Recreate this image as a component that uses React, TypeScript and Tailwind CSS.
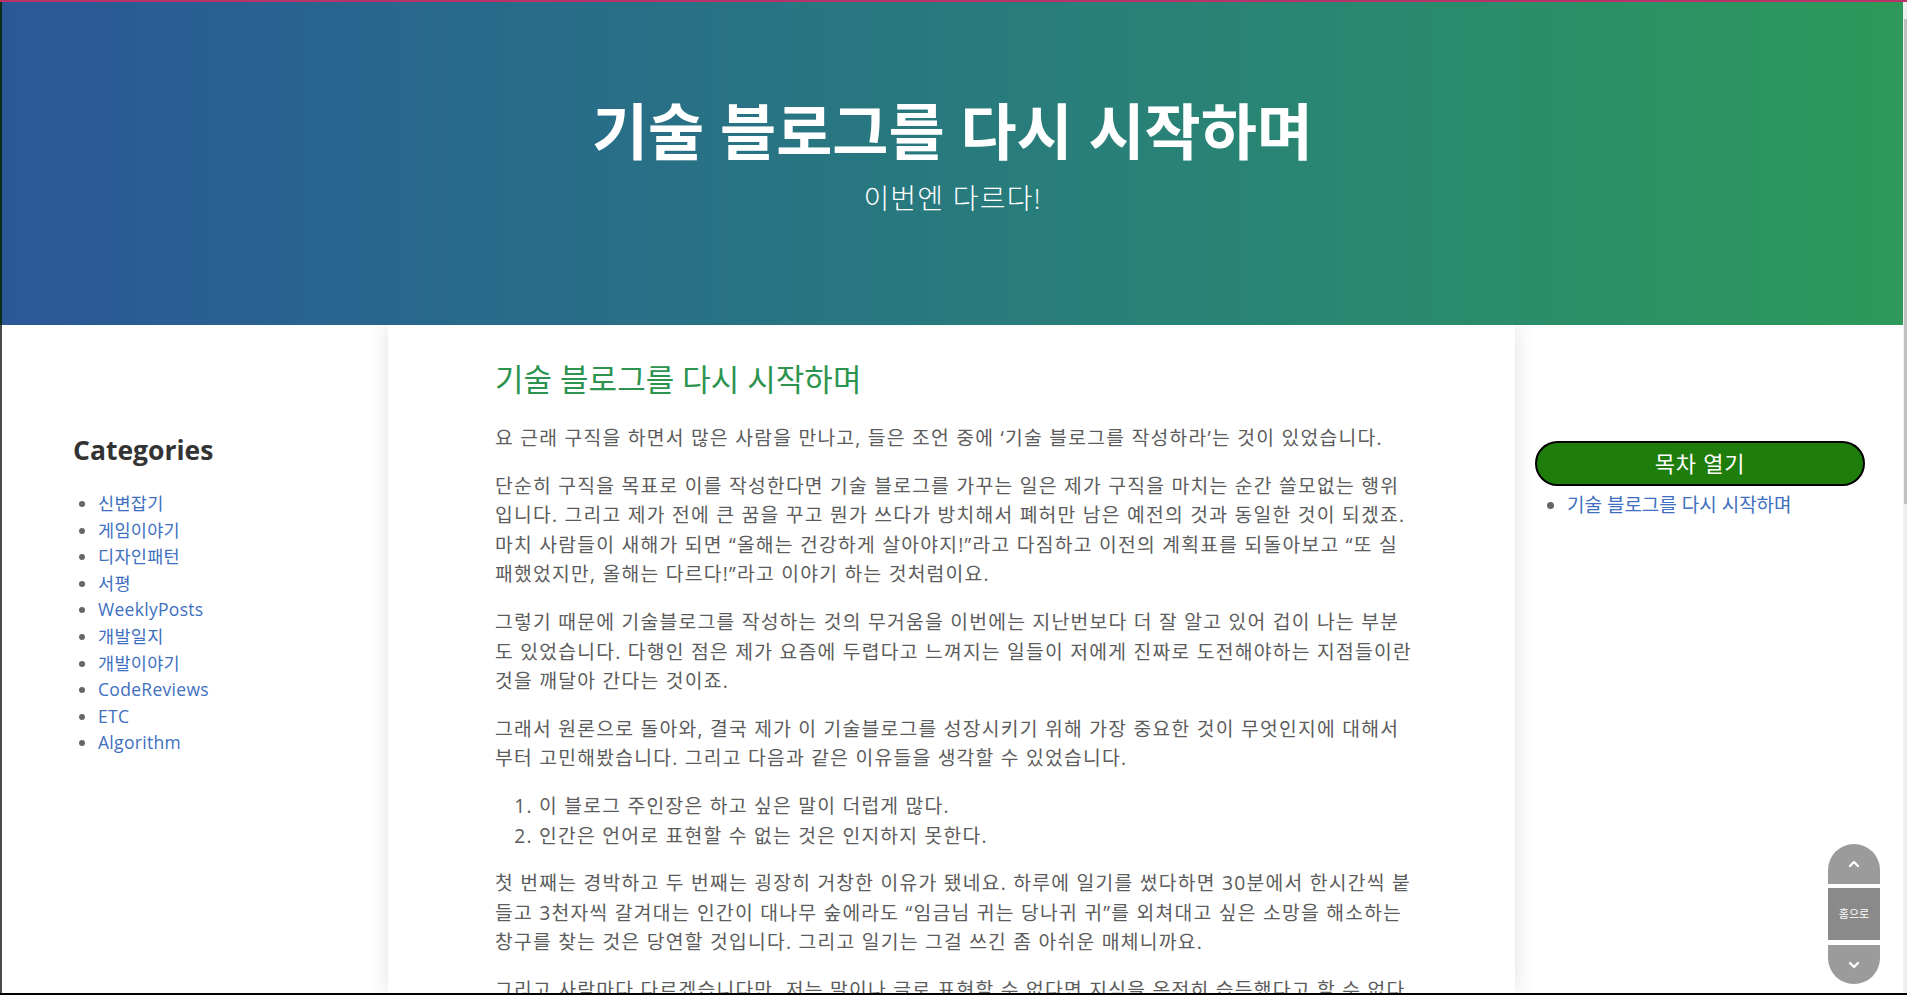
import { ChevronUp, ChevronDown } from "lucide-react";

const categories = [
  "신변잡기",
  "게임이야기",
  "디자인패턴",
  "서평",
  "WeeklyPosts",
  "개발일지",
  "개발이야기",
  "CodeReviews",
  "ETC",
  "Algorithm",
];

const paragraphs = [
  "요 근래 구직을 하면서 많은 사람을 만나고, 들은 조언 중에 ‘기술 블로그를 작성하라’는 것이 있었습니다.",
  "단순히 구직을 목표로 이를 작성한다면 기술 블로그를 가꾸는 일은 제가 구직을 마치는 순간 쓸모없는 행위입니다. 그리고 제가 전에 큰 꿈을 꾸고 뭔가 쓰다가 방치해서 폐허만 남은 예전의 것과 동일한 것이 되겠죠. 마치 사람들이 새해가 되면 “올해는 건강하게 살아야지!”라고 다짐하고 이전의 계획표를 되돌아보고 “또 실패했었지만, 올해는 다르다!”라고 이야기 하는 것처럼이요.",
  "그렇기 때문에 기술블로그를 작성하는 것의 무거움을 이번에는 지난번보다 더 잘 알고 있어 겁이 나는 부분도 있었습니다. 다행인 점은 제가 요즘에 두렵다고 느껴지는 일들이 저에게 진짜로 도전해야하는 지점들이란 것을 깨달아 간다는 것이죠.",
  "그래서 원론으로 돌아와, 결국 제가 이 기술블로그를 성장시키기 위해 가장 중요한 것이 무엇인지에 대해서부터 고민해봤습니다. 그리고 다음과 같은 이유들을 생각할 수 있었습니다.",
];

const reasons = [
  "이 블로그 주인장은 하고 싶은 말이 더럽게 많다.",
  "인간은 언어로 표현할 수 없는 것은 인지하지 못한다.",
];

const after = [
  "첫 번째는 경박하고 두 번째는 굉장히 거창한 이유가 됐네요. 하루에 일기를 썼다하면 30분에서 한시간씩 붙들고 3천자씩 갈겨대는 인간이 대나무 숲에라도 “임금님 귀는 당나귀 귀”를 외쳐대고 싶은 소망을 해소하는 창구를 찾는 것은 당연할 것입니다. 그리고 일기는 그걸 쓰긴 좀 아쉬운 매체니까요.",
  "그리고 사람마다 다르겠습니다만, 저는 말이나 글로 표현할 수 없다면 지식을 온전히 습득했다고 할 수 없다고 생각합니다. 그래서 이번에는 배운 것을 글로 정리하는 연습을 꾸준히 해보려고 합니다.",
];

export default function App() {
  return (
    <div className="flex h-[995px] w-full overflow-hidden border-t-2 border-b-2 border-t-[#b8336a] border-b-black bg-white font-['Open_Sans','Noto_Sans_CJK_KR',sans-serif]">
      <div className="relative flex min-w-0 flex-1 flex-col">
        {/* Header */}
        <header className="h-[323px] shrink-0 border-l-2 border-black/70 bg-gradient-to-r from-[#2b5797] to-[#2e9959] text-center text-white">
          <h1 className="pt-[93px] text-[61px] font-bold leading-[73px]">기술 블로그를 다시 시작하며</h1>
          <p className="mt-[10px] text-[28px] font-light leading-[40px] tracking-[1.2px]">이번엔 다르다!</p>
        </header>

        <div className="flex min-h-0 flex-1 overflow-hidden border-l-2 border-black/70">
          {/* Categories */}
          <aside className="w-[386px] shrink-0 pl-[71px] pt-[107px]">
            <h2 className="text-[26.5px] font-bold leading-[36px] text-[#333]">Categories</h2>
            <ul className="mt-[22px] list-disc pl-[25px] text-[17.5px] leading-[26.6px] tracking-[0.3px] text-[#3e6fc0] marker:text-[#666]">
              {categories.map((c) => (
                <li key={c}>
                  <a href="#">{c}</a>
                </li>
              ))}
            </ul>
          </aside>

          {/* Post */}
          <main className="w-[1127px] shrink-0 bg-white pl-[107px] pr-[102px] pt-[34px] shadow-[0_0_20px_rgba(0,0,0,0.12)]">
            <h2 className="text-[31px] leading-[40px] text-[#2d9450]">기술 블로그를 다시 시작하며</h2>
            <div className="mt-[24px] text-[19.3px] leading-[29.6px] tracking-[1.25px] text-[#5c5c5c]">
              {paragraphs.map((p, i) => (
                <p key={i} className="mb-[18px]">{p}</p>
              ))}
              <ol className="mb-[18px] list-decimal pl-[44px]">
                {reasons.map((r) => (
                  <li key={r}>{r}</li>
                ))}
              </ol>
              {after.map((p, i) => (
                <p key={i} className="mb-[18px]">{p}</p>
              ))}
            </div>
          </main>

          {/* Table of contents */}
          <aside className="flex-1 pl-[20px] pr-[38px] pt-[116px]">
            <button className="h-[45px] w-full rounded-full border-2 border-black bg-[#1f7d0c] text-[22px] tracking-[0.8px] text-white">
              목차 열기
            </button>
            <ul className="mt-[5px] list-disc pl-[32px] text-[19px] leading-[28.5px] text-[#3e6fc0] marker:text-[#666]">
              <li>
                <a href="#">기술 블로그를 다시 시작하며</a>
              </li>
            </ul>
          </aside>
        </div>

        {/* Floating nav */}
        <div className="absolute bottom-[9px] right-[23px] flex w-[52px] flex-col gap-[4px]">
          <button className="flex h-[40px] items-center justify-center rounded-t-[26px] bg-[#9b9b9b] text-white">
            <ChevronUp size={16} strokeWidth={3.5} />
          </button>
          <button className="h-[52px] bg-[#8a8a8a] text-[11px] text-white">홈으로</button>
          <button className="mt-[1px] flex h-[39px] items-center justify-center rounded-b-[26px] bg-[#9b9b9b] text-white">
            <ChevronDown size={16} strokeWidth={3.5} />
          </button>
        </div>
      </div>

      {/* Scrollbar */}
      <div className="w-[4px] shrink-0 bg-[#f0f0f0] pt-[17px]">
        <div className="mx-auto h-[485px] w-[3px] bg-[#c1c1c1]" />
      </div>
    </div>
  );
}
